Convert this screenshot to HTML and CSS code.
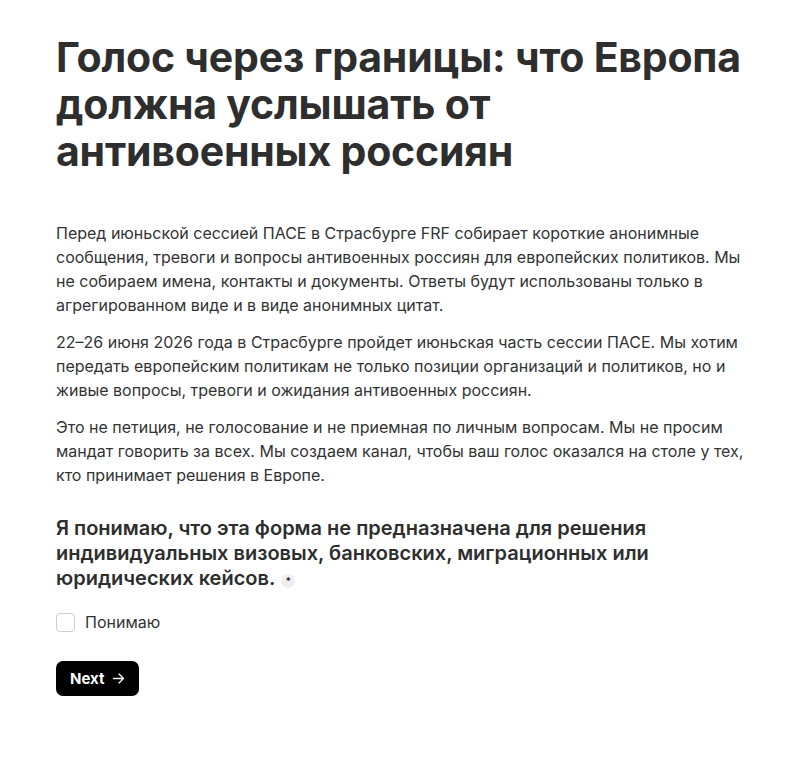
FILE: index.html
```html
<!DOCTYPE html>
<html lang="ru">
<head>
<meta charset="utf-8">
<link rel="stylesheet" href="styles.css">
</head>
<body>
<main class="page">
  <h1 class="title">Голос через границы: что Европа должна услышать от антивоенных россиян</h1>
  <div class="intro">
    <p>Перед июньской сессией ПАСЕ в Страсбурге FRF собирает короткие анонимные сообщения, тревоги и вопросы антивоенных россиян для европейских политиков. Мы не собираем имена, контакты и документы. Ответы будут использованы только в агрегированном виде и в виде анонимных цитат.</p>
    <p>22–26 июня 2026 года в Страсбурге пройдет июньская часть сессии ПАСЕ. Мы хотим передать европейским политикам не только позиции организаций и политиков, но и живые вопросы, тревоги и ожидания антивоенных россиян.</p>
    <p>Это не петиция, не голосование и не приемная по личным вопросам. Мы не просим мандат говорить за всех. Мы создаем канал, чтобы ваш голос оказался на столе у тех, кто принимает решения в Европе.</p>
  </div>
  <section class="question">
    <h2 class="q-title">Я понимаю, что эта форма не предназначена для решения индивидуальных визовых, банковских, миграционных или юридических кейсов.<span class="req">*</span></h2>
    <label class="option"><span class="box"></span><span class="opt-text">Понимаю</span></label>
  </section>
  <button class="next">Next <svg width="13" height="13" viewBox="0 0 13 13" fill="none" stroke="#fff" stroke-width="1.3" stroke-linecap="round" stroke-linejoin="round"><path d="M1.5 6.5h10M7 2l4.5 4.5L7 11"/></svg></button>
</main>
</body>
</html>
```
FILE: styles.css
```css
html, body { margin: 0; padding: 0; background: #fff; }
body { font-family: Inter, "Noto Sans", sans-serif; color: #333; }
.page { padding: 34px 50px 40px 56px; max-width: 692px; }
.title { margin: 0; max-width: 686px; font-size: 41px; line-height: 47px; font-weight: 700; color: #2e2e2e; letter-spacing: -0.2px; }
.intro { margin-top: 46px; font-size: 16px; line-height: 24px; color: #333; }
.intro p { margin: 0 0 13px 0; }
.question { margin-top: 29px; }
.q-title { margin: 0; max-width: 686px; font-size: 20px; line-height: 25px; font-weight: 600; color: #2e2e2e; }
.req { display: inline-flex; align-items: center; justify-content: center; margin-left: 6px; width: 14px; height: 14px; border-radius: 50%; background: #f0f0f3; font-size: 10px; font-weight: 700; color: #333; vertical-align: 0px; line-height: 14px; }
.option { display: flex; align-items: center; gap: 10px; margin-top: 21px; font-size: 16px; color: #333; }
.box { width: 19px; height: 19px; border: 1px solid #cfcfcf; border-radius: 4px; box-sizing: border-box; }
.next { margin-top: 29px; display: inline-flex; align-items: center; gap: 8px; height: 35px; padding: 0 14px 0 14px; background: #000; color: #fff; border: none; border-radius: 7px; font-family: Inter, sans-serif; font-size: 15px; font-weight: 700; }
```
